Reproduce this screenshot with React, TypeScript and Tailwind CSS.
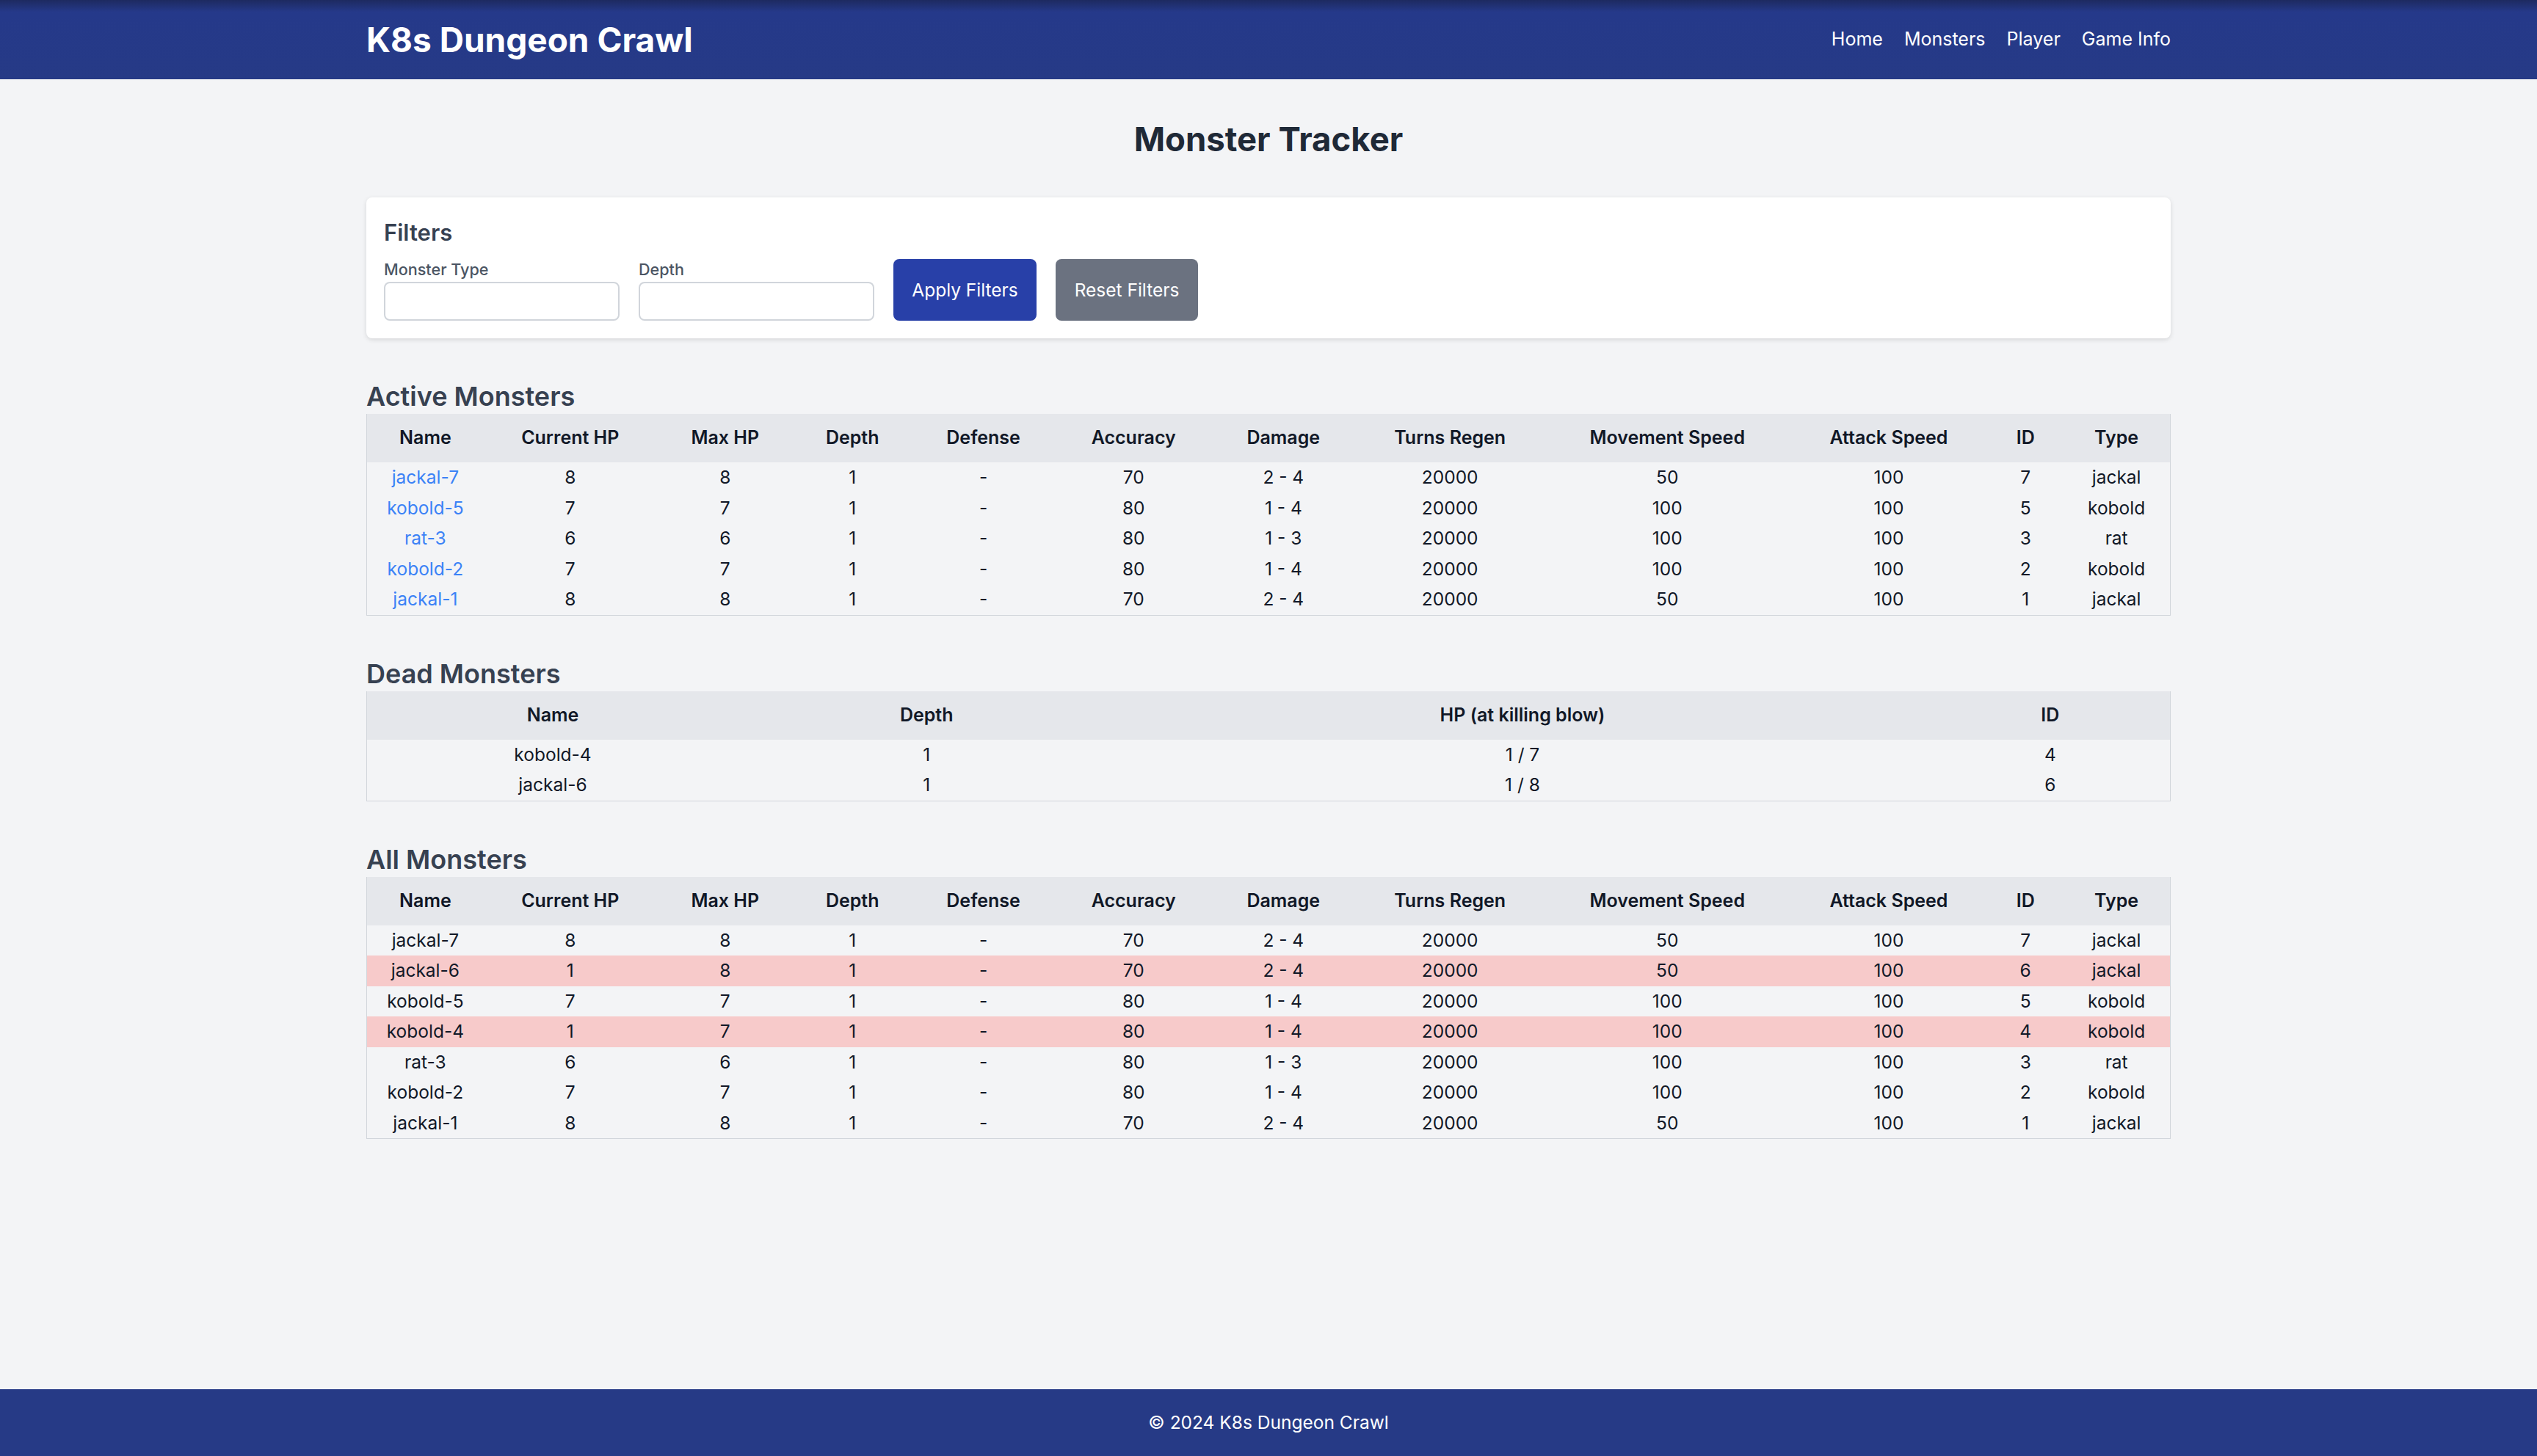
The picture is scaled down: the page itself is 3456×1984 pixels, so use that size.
type Monster = {
  id: number;
  name: string;
  type: string;
  hp: number;
  maxHp: number;
  depth: number;
  accuracy: number;
  damage: string;
  regen: number;
  moveSpeed: number;
  attackSpeed: number;
};

const ALL: Monster[] = [
  { id: 7, name: "jackal-7", type: "jackal", hp: 8, maxHp: 8, depth: 1, accuracy: 70, damage: "2 - 4", regen: 20000, moveSpeed: 50, attackSpeed: 100 },
  { id: 6, name: "jackal-6", type: "jackal", hp: 1, maxHp: 8, depth: 1, accuracy: 70, damage: "2 - 4", regen: 20000, moveSpeed: 50, attackSpeed: 100 },
  { id: 5, name: "kobold-5", type: "kobold", hp: 7, maxHp: 7, depth: 1, accuracy: 80, damage: "1 - 4", regen: 20000, moveSpeed: 100, attackSpeed: 100 },
  { id: 4, name: "kobold-4", type: "kobold", hp: 1, maxHp: 7, depth: 1, accuracy: 80, damage: "1 - 4", regen: 20000, moveSpeed: 100, attackSpeed: 100 },
  { id: 3, name: "rat-3", type: "rat", hp: 6, maxHp: 6, depth: 1, accuracy: 80, damage: "1 - 3", regen: 20000, moveSpeed: 100, attackSpeed: 100 },
  { id: 2, name: "kobold-2", type: "kobold", hp: 7, maxHp: 7, depth: 1, accuracy: 80, damage: "1 - 4", regen: 20000, moveSpeed: 100, attackSpeed: 100 },
  { id: 1, name: "jackal-1", type: "jackal", hp: 8, maxHp: 8, depth: 1, accuracy: 70, damage: "2 - 4", regen: 20000, moveSpeed: 50, attackSpeed: 100 },
];

const DEAD_IDS = [4, 6];
const ACTIVE = ALL.filter((m) => !DEAD_IDS.includes(m.id));
const DEAD = DEAD_IDS.map((id) => ALL.find((m) => m.id === id)!);

const COLS = ["Name", "Current HP", "Max HP", "Depth", "Defense", "Accuracy", "Damage", "Turns Regen", "Movement Speed", "Attack Speed", "ID", "Type"];

// header cells carry the horizontal padding; body cells barely any, so the
// column widths come from the header labels
const th = "h-[66px] px-[28.8px] text-center text-[25px] font-semibold text-[#111827] whitespace-nowrap";
const td = "px-[2px] py-0 text-center text-[24.5px] leading-[41.5px] text-[#111827] whitespace-nowrap";

function Section({ title, children }: { title: string; children: React.ReactNode }) {
  return (
    <section className="mb-[47px]">
      <h2 className="pt-[8px] text-[36px] leading-[48px] font-semibold text-[#374151]">{title}</h2>
      {children}
    </section>
  );
}

function MonsterTable({ rows, links, markDead }: { rows: Monster[]; links?: boolean; markDead?: boolean }) {
  return (
    <table className="w-full border-collapse border-x border-b border-[#d1d5db]">
      <thead className="bg-[#e5e7eb]">
        <tr>
          {COLS.map((c) => (
            <th key={c} className={th}>{c}</th>
          ))}
        </tr>
      </thead>
      <tbody>
        {rows.map((m) => {
          const dead = markDead && DEAD_IDS.includes(m.id);
          return (
            <tr key={m.id} className={dead ? "bg-[#f7caca]" : ""}>
              <td className={td}>
                {links ? <a href="#" className="text-[#3b82f6]">{m.name}</a> : m.name}
              </td>
              <td className={td}>{m.hp}</td>
              <td className={td}>{m.maxHp}</td>
              <td className={td}>{m.depth}</td>
              <td className={td}>-</td>
              <td className={td}>{m.accuracy}</td>
              <td className={td}>{m.damage}</td>
              <td className={td}>{m.regen}</td>
              <td className={td}>{m.moveSpeed}</td>
              <td className={td}>{m.attackSpeed}</td>
              <td className={td}>{m.id}</td>
              <td className={td}>{m.type}</td>
            </tr>
          );
        })}
      </tbody>
    </table>
  );
}

export default function App() {
  return (
    <div className="flex min-h-screen flex-col bg-[#f3f4f6] font-['Inter',sans-serif]">
      <header className="h-[108px] bg-gradient-to-b from-[#1d2a60] via-[#25398a] via-15% to-[#263a86]">
        <div className="mx-auto flex h-full max-w-[2458px] items-center justify-between">
          <h1 className="text-[46px] font-bold text-white">K8s Dungeon Crawl</h1>
          <nav className="flex gap-[29px] text-[25px] text-white">
            <a href="#">Home</a>
            <a href="#">Monsters</a>
            <a href="#">Player</a>
            <a href="#">Game Info</a>
          </nav>
        </div>
      </header>

      <main className="mx-auto w-full max-w-[2458px] flex-1 pt-[50px]">
        <h1 className="mb-[47px] text-center text-[45.5px] leading-[64px] font-bold text-[#1f2937]">Monster Tracker</h1>

        <div className="mb-[47px] rounded-[8px] bg-white p-[24px] shadow-[0_2px_6px_rgba(0,0,0,0.12)]">
          <h2 className="mb-[13px] text-[31px] leading-[47px] font-semibold text-[#374151]">Filters</h2>
          <div className="flex gap-[26px]">
            <div className="flex flex-col">
              <label className="mb-[2px] text-[21.6px] leading-[29px] font-medium text-[#4b5563]">Monster Type</label>
              <input className="h-[53px] w-[321px] rounded-[8px] border-2 border-[#d1d5db] bg-white px-[16px] text-[24.5px]" />
            </div>
            <div className="flex flex-col">
              <label className="mb-[2px] text-[21.6px] leading-[29px] font-medium text-[#4b5563]">Depth</label>
              <input className="h-[53px] w-[321px] rounded-[8px] border-2 border-[#d1d5db] bg-white px-[16px] text-[24.5px]" />
            </div>
            <button className="w-[195px] rounded-[8px] bg-[#2840a8] text-[24.5px] text-white">Apply Filters</button>
            <button className="w-[194px] rounded-[8px] bg-[#6b7280] text-[24.5px] text-white">Reset Filters</button>
          </div>
        </div>

        <Section title="Active Monsters">
          <MonsterTable rows={ACTIVE} links />
        </Section>

        <Section title="Dead Monsters">
          <table className="w-full border-collapse border-x border-b border-[#d1d5db]">
            <thead className="bg-[#e5e7eb]">
              <tr>
                <th className={th}>Name</th>
                <th className={th}>Depth</th>
                <th className={th}>HP (at killing blow)</th>
                <th className={th}>ID</th>
              </tr>
            </thead>
            <tbody>
              {DEAD.map((m) => (
                <tr key={m.id}>
                  <td className={td}>{m.name}</td>
                  <td className={td}>{m.depth}</td>
                  <td className={td}>{m.hp} / {m.maxHp}</td>
                  <td className={td}>{m.id}</td>
                </tr>
              ))}
            </tbody>
          </table>
        </Section>

        <Section title="All Monsters">
          <MonsterTable rows={ALL} markDead />
        </Section>
      </main>

      <footer className="flex h-[91px] items-center justify-center bg-[#263a86] text-[24.5px] text-white">
        © 2024 K8s Dungeon Crawl
      </footer>
    </div>
  );
}
